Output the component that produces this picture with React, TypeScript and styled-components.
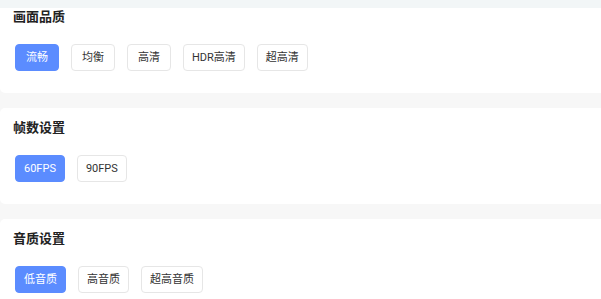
import React, { useEffect, useRef, useState } from "react";
import styled, { createGlobalStyle } from "styled-components";

const GlobalStyle = createGlobalStyle`
  html, body {
    margin: 0;
    padding: 0;
    background: #f7f7f7;
    font-family: Roboto, "Noto Sans CJK SC", sans-serif;
  }
`;

const Page = styled.div`
  height: 299px;
  display: flex;
  flex-direction: column;
  background: #f7f7f7;
`;

const TopStrip = styled.div`
  height: 8px;
  flex-shrink: 0;
  background: #f2f6f7;
`;

const Scroller = styled.div`
  flex: 1;
  overflow: hidden;
`;

const List = styled.div`
  display: flex;
  flex-direction: column;
  gap: 15px;
  padding-bottom: 20px;
`;

const Card = styled.section`
  background: #fff;
  border-radius: 5px 0 0 5px;
  height: 96px;
  box-sizing: border-box;
  padding: 11px 15px 0 13px;
  display: flex;
  flex-direction: column;
`;

const Title = styled.h3`
  margin: 0;
  font-size: 13px;
  line-height: 18px;
  font-weight: 700;
  color: #222;
`;

const Options = styled.div`
  display: flex;
  gap: 12px;
  margin-top: 18px;
  padding-left: 2px;
`;

const Option = styled.button<{ $active?: boolean }>`
  height: 27px;
  min-width: 44px;
  box-sizing: border-box;
  padding: 0 8px;
  border-radius: 4px;
  border: 1px solid ${(p) => (p.$active ? "#5b8cff" : "#e6e6e6")};
  background: ${(p) => (p.$active ? "#5b8cff" : "#fff")};
  color: ${(p) => (p.$active ? "#fff" : "#333")};
  font-family: inherit;
  font-size: 11px;
  line-height: 25px;
  cursor: pointer;
`;

type Group = { title: string; options: string[] };

const groups: Group[] = [
  { title: "画面品质", options: ["流畅", "均衡", "高清", "HDR高清", "超高清"] },
  { title: "帧数设置", options: ["60FPS", "90FPS"] },
  { title: "音质设置", options: ["低音质", "高音质", "超高音质"] },
];

const SettingGroup = ({ group }: { group: Group }) => {
  const [selected, setSelected] = useState(0);
  return (
    <Card>
      <Title>{group.title}</Title>
      <Options>
        {group.options.map((o, i) => (
          <Option key={o} $active={i === selected} onClick={() => setSelected(i)}>
            {o}
          </Option>
        ))}
      </Options>
    </Card>
  );
};

const App = () => {
  const scrollRef = useRef<HTMLDivElement>(null);

  // page is shown scrolled a little, first card partly under the top strip
  useEffect(() => {
    if (scrollRef.current) scrollRef.current.scrollTop = 11;
  }, []);

  return (
    <>
      <GlobalStyle />
      <Page>
        <TopStrip />
        <Scroller ref={scrollRef}>
          <List>
            {groups.map((g) => (
              <SettingGroup key={g.title} group={g} />
            ))}
          </List>
        </Scroller>
      </Page>
    </>
  );
};

export default App;
